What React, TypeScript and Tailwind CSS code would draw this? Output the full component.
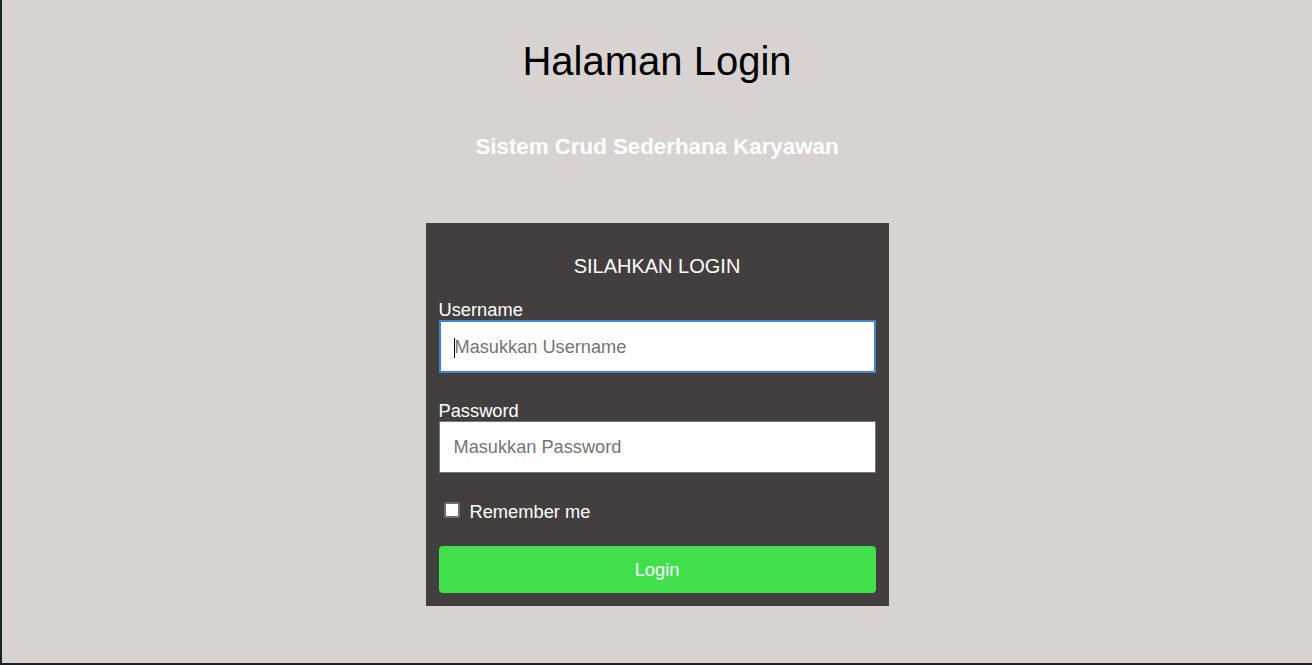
import React from "react";

export default function App() {
  return (
    <div
      className="relative h-[665px] w-[1312px] overflow-hidden border-b-2 border-l-2 border-[#1d2127] bg-[#d8d3d0]"
      style={{ fontFamily: '"Liberation Sans", Arial, sans-serif' }}
    >
      <h1 className="pt-[38px] text-center text-[40px] leading-[46px] text-black">
        Halaman Login
      </h1>
      <h2 className="mt-[50px] text-center text-[22.3px] font-bold leading-[26px] text-white">
        Sistem Crud Sederhana Karyawan
      </h2>

      <div className="mx-auto mt-[63px] w-[463px] bg-[#433f3e] px-[13px] pb-[13px] pt-[31px]">
        <div className="text-center text-[20px] leading-[24px] text-white">SILAHKAN LOGIN</div>

        <label className="mt-[23px] block text-[18.3px] leading-[18px] text-white">Username</label>
        <div className="relative mt-[1px]">
          <input
            readOnly
            placeholder="Masukkan Username"
            className="block h-[53px] w-full border-2 border-[#3d84dc] bg-white pl-[14px] pt-[2px] text-[18.2px] text-black outline-none placeholder:text-[#757575]"
          />
          <span className="absolute left-[15px] top-[18px] h-[20px] w-[1px] bg-black" />
        </div>

        <label className="mt-[29px] block text-[18.3px] leading-[18px] text-white">Password</label>
        <input
          readOnly
          type="password"
          placeholder="Masukkan Password"
          className="mt-[1px] block h-[52px] w-full border border-[#767676] bg-white pl-[14px] text-[18.2px] text-black outline-none placeholder:text-[#757575]"
        />

        <div className="mt-[28px] flex h-[21px] items-start">
          <span className="ml-[5px] mt-[1px] block h-[16px] w-[16px] rounded-[2px] border-2 border-[#6f6f6f] bg-white" />
          <span className="ml-[10px] text-[18.3px] leading-[21px] text-white">Remember me</span>
        </div>

        <button className="mt-[24px] flex h-[47px] w-full items-center justify-center rounded-[4px] bg-[#42df4c] text-[18.3px] text-white">
          Login
        </button>
      </div>
    </div>
  );
}
